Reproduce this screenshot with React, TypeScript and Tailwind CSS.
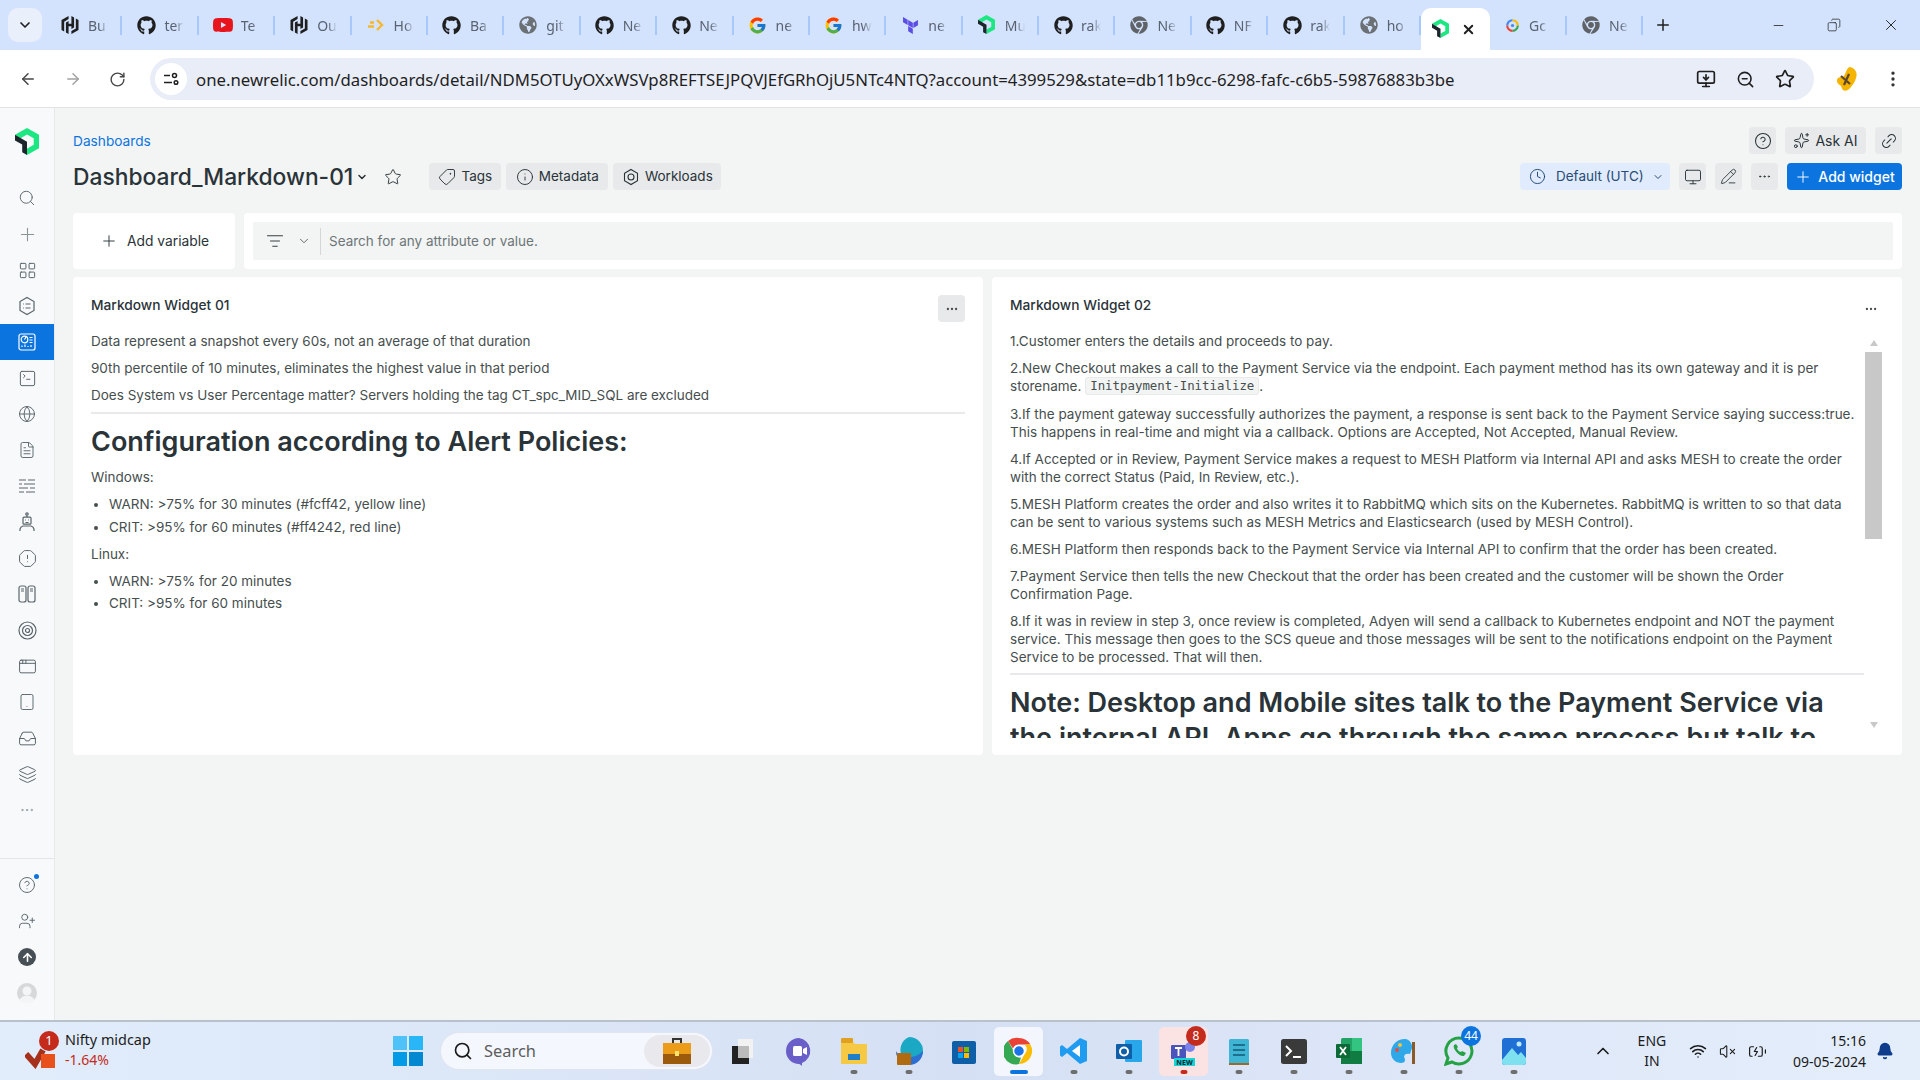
import type { ReactNode } from 'react';
import {
  ArrowLeft,
  ArrowRight,
  RotateCw,
  Star,
  ZoomOut,
  MonitorDown,
  EllipsisVertical,
  Ellipsis,
  ChevronDown,
  ChevronUp,
  Plus,
  Minus,
  Copy,
  X,
  Search,
  LayoutGrid,
  SquareTerminal,
  Globe,
  FileText,
  OctagonAlert,
  AppWindow,
  Tablet,
  Inbox,
  Layers,
  CircleHelp,
  UserPlus,
  Tag,
  Info,
  Clock,
  Monitor,
  PencilLine,
  Link2,
  Sparkles,
  ListFilter,
  Wifi,
  VolumeX,
  BatteryCharging,
  Bell,
  ArrowUp,
} from 'lucide-react';
import { FaGithub, FaChrome, FaGlobeAmericas } from 'react-icons/fa';
import { FcGoogle } from 'react-icons/fc';
import { SiHashicorp, SiYoutube, SiTerraform } from 'react-icons/si';

function NrLogo({ size = 16 }: { size?: number }) {
  return (
    <svg width={size} height={size * 1.12} viewBox="0 0 25 28">
      <path d="M12.5 0 25 7v14l-12.500 7v-6.500l7-4V10.800l-7-4-6.800 3.900L0 7z" fill="#1ce783" />
      <path d="M0 7l12.500 7.200V28l-5-2.800V17.200L0 13z" fill="#1d252c" />
    </svg>
  );
}

function Hostinger() {
  return (
    <svg width="18" height="16" viewBox="0 0 18 16" fill="none" stroke="#f5b82e" strokeWidth="2.400">
      <path d="M1 9.500h6M3 5.500h4M10 3l5 5-5 5" />
    </svg>
  );
}

function CloudFav() {
  return (
    <svg width="17" height="17" viewBox="0 0 16 16" fill="none" strokeWidth="2">
      <path d="M3 8a5 5 0 0 1 5-5" stroke="#4285f4" />
      <path d="M8 3a5 5 0 0 1 5 5" stroke="#fbbc04" />
      <path d="M13 8a5 5 0 0 1-5 5" stroke="#34a853" />
      <path d="M8 13a5 5 0 0 1-5-5" stroke="#ea4335" />
      <circle cx="8" cy="8" r="1.500" fill="#4285f4" stroke="none" />
    </svg>
  );
}

const gh = <FaGithub size={19} className="text-[#1f1f1f]" />;
const hc = <SiHashicorp size={18} className="text-[#1f1f1f]" />;
const goo = <FcGoogle size={19} />;
const chromeGray = <FaChrome size={18} className="text-[#5f6368]" />;
const globe = <FaGlobeAmericas size={18} className="text-[#6b7075]" />;

const tabs: { icon: ReactNode; label: string }[] = [
  { icon: hc, label: 'Bu' },
  { icon: gh, label: 'ter' },
  { icon: <SiYoutube size={20} className="text-[#e8141c]" />, label: 'Te' },
  { icon: hc, label: 'Ou' },
  { icon: <Hostinger />, label: 'Ho' },
  { icon: gh, label: 'Ba' },
  { icon: globe, label: 'git' },
  { icon: gh, label: 'Ne' },
  { icon: gh, label: 'Ne' },
  { icon: goo, label: 'ne' },
  { icon: goo, label: 'hw' },
  { icon: <SiTerraform size={17} className="text-[#5c4ee5]" />, label: 'ne' },
  { icon: <NrLogo size={17} />, label: 'Mu' },
  { icon: gh, label: 'rak' },
  { icon: chromeGray, label: 'Ne' },
  { icon: gh, label: 'NF' },
  { icon: gh, label: 'rak' },
  { icon: globe, label: 'ho' },
];

function Tab({ icon, label }: { icon: ReactNode; label: string }) {
  return (
    <div className="w-[76.400px] h-[19px] flex items-center pl-[14px] border-r-2 border-[#a8c7fa] shrink-0">
      <span className="w-[20px] flex justify-center shrink-0">{icon}</span>
      <span className="ml-[8px] w-[20px] overflow-hidden whitespace-nowrap text-[14px] text-[#5a6270] [mask-image:linear-gradient(to_right,black_55%,transparent)]">
        {label}
      </span>
    </div>
  );
}

function ChromeBar() {
  return (
    <div className="font-['Noto_Sans',sans-serif]">
      <div className="h-[50px] bg-[#d3e3fd] flex items-center relative">
        <div className="ml-[8px] mr-[4px] w-[34px] h-[34px] rounded-[10px] bg-[#e9effb] flex items-center justify-center">
          <ChevronDown size={16} strokeWidth={2.500} className="text-[#1f1f1f]" />
        </div>
        {tabs.map((t, i) => (
          <Tab key={i} icon={t.icon} label={t.label} />
        ))}
        <div className="w-[69px] h-[42px] self-end bg-white rounded-t-[10px] flex items-center pl-[11px] gap-[12px] shrink-0">
          <NrLogo size={17} />
          <X size={15} strokeWidth={3} className="text-[#1f1f1f]" />
        </div>
        <div className="w-[77px] h-[19px] flex items-center pl-[14px] border-r-2 border-[#a8c7fa] shrink-0">
          <CloudFav />
          <span className="ml-[8px] w-[20px] overflow-hidden text-[14px] text-[#5a6270] [mask-image:linear-gradient(to_right,black_55%,transparent)]">Gc</span>
        </div>
        <Tab icon={chromeGray} label="Ne" />
        <Plus size={18} className="ml-[11px] text-[#1f1f1f]" />
        <div className="ml-auto flex items-center pr-[20px] gap-[41px] text-[#1f1f1f]">
          <Minus size={15} strokeWidth={1.250} />
          <Copy size={14} strokeWidth={1.250} className="-scale-x-100" />
          <X size={18} strokeWidth={1.250} />
        </div>
      </div>
      <div className="h-[58px] pt-px bg-white border-b border-[#e3e3e3] flex items-center pl-[19px] text-[#474747]">
        <ArrowLeft size={18} />
        <ArrowRight size={18} className="ml-[27px] text-[#a3a3a3]" />
        <RotateCw size={17} className="ml-[27px]" />
        <div className="ml-[24px] w-[1664px] h-[42px] rounded-full bg-[#e9edf7] flex items-center pl-[5px] pr-[19px]">
          <div className="w-[32px] h-[32px] rounded-full bg-white flex items-center justify-center">
            <svg width="16" height="16" viewBox="0 0 16 16" fill="none" stroke="#1f1f1f" strokeWidth="1.500">
              <path d="M1 4.500h6M1 11.500h8" />
              <circle cx="11.500" cy="4.500" r="2" />
              <circle cx="13" cy="11.500" r="1.800" />
            </svg>
          </div>
          <span className="ml-[9px] pt-[2px] text-[16.770px] text-[#1f1f1f] whitespace-nowrap">
            one.newrelic.com/dashboards/detail/NDM5OTUyOXxWSVp8REFTSEJPQVJEfGRhOjU5NTc4NTQ?account=4399529&state=db11b9cc-6298-fafc-c6b5-59876883b3be
          </span>
          <div className="ml-auto flex items-center gap-[20px] text-[#1f1f1f]">
            <MonitorDown size={20} />
            <ZoomOut size={19} />
            <Star size={20} />
          </div>
        </div>
        <svg width="28" height="28" viewBox="0 0 28 28" className="ml-[19px]">
          <path d="M17 2c5 1 8 6 6 11-1 4-3 6-5 9-2 3-6 5-8 3-2-2-1-4-3-5-3-1-4-5-2-7 3-2 4 0 6-2 2-3 3-9 6-9z" fill="#f5b400" />
          <path d="M8 11l9 8M16 9l-5 11" stroke="#5a4630" strokeWidth="2.200" />
        </svg>
        <EllipsisVertical size={20} className="ml-[22px] text-[#333]" />
      </div>
    </div>
  );
}

const navIcon = 'text-[#59656b]';

function HexList() {
  return (
    <svg width="20" height="20" viewBox="0 0 20 20" fill="none" stroke="#59656b" strokeWidth="1.200">
      <path d="M10 1.500 17 5.500v9L10 18.500 3 14.500v-9z" />
      <path d="M8.500 8h5M8.500 12h5M6 8h.8M6 12h.8" />
    </svg>
  );
}

function DashIcon() {
  return (
    <svg width="18" height="18" viewBox="0 0 18 18" fill="none" stroke="#fff" strokeWidth="1.200">
      <rect x="1" y="1" width="16" height="16" rx="2" />
      <circle cx="6.500" cy="6.500" r="3.300" />
      <path d="M6.500 6.500 8 4M11.500 4.500h3M11.500 7h3M11.500 9.500h3M4 14v-1.500M7 14v-2.500M10 14v-1M13 14v-2" />
    </svg>
  );
}

function LinesIcon() {
  return (
    <svg width="18" height="18" viewBox="0 0 18 18" fill="none" stroke="#59656b" strokeWidth="1.100">
      <path d="M1 3h7M10 3h7M1 7h3M6 7h11M1 11h9M12 11h5M1 15h5M8 15h9" />
    </svg>
  );
}

function ColumnsIcon() {
  return (
    <svg width="18" height="18" viewBox="0 0 18 18" fill="none" stroke="#59656b" strokeWidth="1.200">
      <rect x="1" y="1" width="7" height="16" rx="2" />
      <rect x="10" y="1" width="7" height="16" rx="2" />
      <path d="M3 4h3M12 4h3M3 6h3M12 6h3" />
    </svg>
  );
}

function TargetIcon() {
  return (
    <svg width="19" height="19" viewBox="0 0 19 19" fill="none" stroke="#59656b" strokeWidth="1.200">
      <circle cx="9.500" cy="9.500" r="8.500" />
      <circle cx="9.500" cy="9.500" r="5" />
      <circle cx="9.500" cy="9.500" r="2" />
    </svg>
  );
}

function RobotIcon() {
  return (
    <svg width="18" height="20" viewBox="0 0 18 20" fill="none" stroke="#59656b" strokeWidth="1.200">
      <circle cx="9" cy="2" r="1.200" />
      <path d="M9 3.200v2" />
      <rect x="5" y="5.200" width="8" height="7" rx="1" />
      <path d="M7 8h.8M10.200 8h.8M7.500 10.500h3" />
      <path d="M2 19v-2a4 4 0 0 1 3-3h8a4 4 0 0 1 3 3v2" />
    </svg>
  );
}

function Avatar() {
  return (
    <svg width="20" height="20" viewBox="0 0 20 20">
      <circle cx="10" cy="10" r="10" fill="#d6d8da" />
      <circle cx="10" cy="8" r="4.500" fill="#f4f5f6" />
      <path d="M2.500 17a8 6.500 0 0 1 15 0 10 10 0 0 1-15 0z" fill="#f4f5f6" />
    </svg>
  );
}

const navItems: ReactNode[] = [
  <Search size={18} strokeWidth={1.250} className={navIcon} />,
  <Plus size={21} strokeWidth={1.250} className="text-[#8a9499]" />,
  <LayoutGrid size={19} strokeWidth={1.250} className={navIcon} />,
  <HexList />,
  <DashIcon />,
  <SquareTerminal size={19} strokeWidth={1.250} className={navIcon} />,
  <Globe size={18} strokeWidth={1.250} className={navIcon} />,
  <FileText size={18} strokeWidth={1.250} className={navIcon} />,
  <LinesIcon />,
  <RobotIcon />,
  <OctagonAlert size={19} strokeWidth={1.250} className={navIcon} />,
  <ColumnsIcon />,
  <TargetIcon />,
  <AppWindow size={19} strokeWidth={1.250} className={navIcon} />,
  <Tablet size={18} strokeWidth={1.250} className={navIcon} />,
  <Inbox size={19} strokeWidth={1.250} className={navIcon} />,
  <Layers size={19} strokeWidth={1.250} className={navIcon} />,
  <Ellipsis size={16} strokeWidth={1.250} className="text-[#8a9499]" />,
];

function Sidebar() {
  return (
    <div className="w-[55px] shrink-0 bg-[#f8f9fb] border-r border-[#e8eaea] flex flex-col">
      <div className="h-[72px] pt-[20px] pr-[1px] flex justify-center">
        <NrLogo size={24} />
      </div>
      <div className="flex-1">
        {navItems.map((icon, i) => (
          <div key={i} className={`h-[36px] flex items-center justify-center ${i === 4 ? 'bg-[#0c74df]' : ''}`}>
            {icon}
          </div>
        ))}
      </div>
      <div className="h-[162px] border-t border-[#e3e5e6] pt-[8px]">
        <div className="h-[36px] flex items-center justify-center">
          <span className="relative">
            <CircleHelp size={18} strokeWidth={1.250} className={navIcon} />
            <span className="absolute -top-[2px] -right-[3px] w-[5px] h-[5px] rounded-full bg-[#0c74df]" />
          </span>
        </div>
        <div className="h-[36px] flex items-center justify-center">
          <UserPlus size={18} strokeWidth={1.250} className={navIcon} />
        </div>
        <div className="h-[36px] flex items-center justify-center">
          <span className="w-[18px] h-[18px] rounded-full bg-[#464e56] flex items-center justify-center">
            <ArrowUp size={13} strokeWidth={3} className="text-white" />
          </span>
        </div>
        <div className="h-[36px] flex items-center justify-center">
          <Avatar />
        </div>
      </div>
    </div>
  );
}

function Chip({ icon, label, width }: { icon: ReactNode; label: string; width: string }) {
  return (
    <div className={`h-[27px] bg-[#e7e9ea] rounded-[4px] flex items-center justify-center gap-[5px] text-[13.500px] text-[#293338] ${width}`}>
      {icon}
      <span>{label}</span>
    </div>
  );
}

function IconBtn({ children }: { children: ReactNode }) {
  return <div className="w-[27px] h-[27px] bg-[#e7e9ea] rounded-[4px] flex items-center justify-center text-[#293338]">{children}</div>;
}

function PageHeader() {
  return (
    <>
      <div className="h-[27px] flex items-center">
        <a className="pt-[2px] text-[13.700px] text-[#0c74df]">Dashboards</a>
        <div className="ml-auto flex items-center gap-[9px]">
          <IconBtn>
            <CircleHelp size={18} strokeWidth={1.400} />
          </IconBtn>
          <div className="h-[27px] w-[81px] bg-[#e7e9ea] rounded-[4px] flex items-center justify-center gap-[5px] text-[14px] text-[#293338]">
            <Sparkles size={17} strokeWidth={1.400} />
            <span>Ask AI</span>
          </div>
          <IconBtn>
            <Link2 size={18} strokeWidth={1.400} className="-rotate-45" />
          </IconBtn>
        </div>
      </div>
      <div className="mt-[9px] h-[27px] flex items-center">
        <span className="pt-[2px] text-[22.800px] font-medium text-[#293338] whitespace-nowrap">Dashboard_Markdown-01</span>
        <ChevronDown size={12} strokeWidth={3} className="ml-[3px] text-[#293338]" />
        <Star size={18} strokeWidth={1.250} className="ml-[16px] text-[#293338]" />
        <div className="ml-[27px] flex gap-[5px]">
          <Chip width="w-[72px]" icon={<Tag size={18} strokeWidth={1.250} className="rotate-90" />} label="Tags" />
          <Chip width="w-[102px]" icon={<Info size={18} strokeWidth={1.250} />} label="Metadata" />
          <Chip
            width="w-[108px]"
            icon={
              <svg width="18" height="18" viewBox="0 0 18 18" fill="none" stroke="#293338" strokeWidth="1.100">
                <path d="M9 1.500 15.500 5.300v7.400L9 16.500 2.500 12.700V5.300z" />
                <circle cx="9" cy="9" r="3" />
              </svg>
            }
            label="Workloads"
          />
        </div>
        <div className="ml-auto flex items-center gap-[9px]">
          <div className="w-[150px] h-[27px] rounded-[4px] bg-[#e0ecfd] flex items-center pl-[9px] text-[13.500px] text-[#2a4a75]">
            <Clock size={17} strokeWidth={1.250} className="text-[#123a6b]" />
            <span className="ml-[10px]">Default (UTC)</span>
            <ChevronDown size={12} strokeWidth={2} className="ml-[8px]" />
          </div>
          <IconBtn>
            <Monitor size={18} strokeWidth={1.250} />
          </IconBtn>
          <IconBtn>
            <PencilLine size={17} strokeWidth={1.250} />
          </IconBtn>
          <IconBtn>
            <Ellipsis size={15} strokeWidth={1.500} />
          </IconBtn>
          <div className="w-[115px] h-[27px] rounded-[4px] bg-[#0c74df] flex items-center justify-center gap-[6px] text-[14px] font-medium text-white">
            <Plus size={18} strokeWidth={1.250} />
            <span>Add widget</span>
          </div>
        </div>
      </div>
    </>
  );
}

function FilterBar() {
  return (
    <div className="mt-[23px] flex gap-[9px] h-[56px]">
      <div className="w-[162px] rounded-[4px] bg-white flex items-center pl-[27px] gap-[9px] text-[13.800px] text-[#293338]">
        <Plus size={18} strokeWidth={1.250} />
        <span>Add variable</span>
      </div>
      <div className="flex-1 rounded-[4px] bg-white p-[9px]">
        <div className="h-full rounded-[2px] bg-[#f3f4f4] flex items-center">
          <div className="w-[68px] flex items-center pl-[13px] gap-[13px] border-r border-[#d5d7d7] h-[27px]">
            <ListFilter size={18} strokeWidth={1.250} className="text-[#293338]" />
            <ChevronDown size={14} strokeWidth={1.250} className="text-[#293338]" />
          </div>
          <span className="ml-[8px] text-[13.500px] text-[#6d7678]">Search for any attribute or value.</span>
        </div>
      </div>
    </div>
  );
}

const para = 'mb-[9px]';

function WidgetOne() {
  return (
    <div className="rounded-[4px] bg-white pt-[18px] px-[18px]">
      <div className="h-[27px] flex justify-between">
        <span className="text-[13.750px] leading-[18px] pt-px font-medium text-[#293338]">Markdown Widget 01</span>
        <div className="w-[27px] h-[27px] rounded-[4px] bg-[#e7e9ea] flex items-center justify-center">
          <Ellipsis size={14} className="text-[#464e4e]" />
        </div>
      </div>
      <div className="mt-[10px] text-[13.500px] leading-[18px] text-[#464e4e]">
        <p className={para}>Data represent a snapshot every 60s, not an average of that duration</p>
        <p className={para}>90th percentile of 10 minutes, eliminates the highest value in that period</p>
        <p className="mb-[8px]">Does System vs User Percentage matter? Servers holding the tag CT_spc_MID_SQL are excluded</p>
        <hr className="border-0 h-[2px] bg-[#e7e9ea]" />
        <h1 className="mt-[10px] mb-[9px] text-[27px] leading-[35px] font-semibold text-[#293338]">Configuration according to Alert Policies:</h1>
        <p className={para}>Windows:</p>
        <ul className="list-disc pl-[18px] mb-[9px] space-y-[5px]">
          <li>WARN: &gt;75% for 30 minutes (#fcff42, yellow line)</li>
          <li>CRIT: &gt;95% for 60 minutes (#ff4242, red line)</li>
        </ul>
        <p className={para}>Linux:</p>
        <ul className="list-disc pl-[18px] space-y-[4px]">
          <li>WARN: &gt;75% for 20 minutes</li>
          <li>CRIT: &gt;95% for 60 minutes</li>
        </ul>
      </div>
    </div>
  );
}

function WidgetTwo() {
  return (
    <div className="rounded-[4px] bg-white pt-[18px] pl-[18px] pr-[18px] flex flex-col">
      <div className="h-[27px] flex justify-between">
        <span className="text-[13.750px] leading-[18px] pt-px font-medium text-[#293338]">Markdown Widget 02</span>
        <div className="w-[27px] h-[27px] flex items-center justify-center">
          <Ellipsis size={14} className="text-[#464e4e]" />
        </div>
      </div>
      <div className="mt-[10px] h-[406px] flex">
        <div className="w-[854px] overflow-hidden text-[13.500px] leading-[18px] text-[#464e4e]">
          <p className={para}>1.Customer enters the details and proceeds to pay.</p>
          <p className="mb-[10px]">
            2.New Checkout makes a call to the Payment Service via the endpoint. Each payment method has its own gateway and it is per storename.{' '}
            <code className="inline-block align-top h-[18px] leading-[16px] font-['DejaVu_Sans_Mono',monospace] text-[12.400px] px-[4px] bg-[#f3f4f4] border border-[#e7e9ea] rounded-[3px]">Initpayment-Initialize</code>.
          </p>
          <p className={para}>
            3.If the payment gateway successfully authorizes the payment, a response is sent back to the Payment Service saying success:true. This happens in real-time and might via a callback. Options are Accepted, Not Accepted, Manual Review.
          </p>
          <p className={para}>
            4.If Accepted or in Review, Payment Service makes a request to MESH Platform via Internal API and asks MESH to create the order with the correct Status (Paid, In Review, etc.).
          </p>
          <p className={para}>
            5.MESH Platform creates the order and also writes it to RabbitMQ which sits on the Kubernetes. RabbitMQ is written to so that data can be sent to various systems such as MESH Metrics and Elasticsearch (used by MESH Control).
          </p>
          <p className={para}>6.MESH Platform then responds back to the Payment Service via Internal API to confirm that the order has been created.</p>
          <p className={para}>7.Payment Service then tells the new Checkout that the order has been created and the customer will be shown the Order Confirmation Page.</p>
          <p className="mb-[7px]">
            8.If it was in review in step 3, once review is completed, Adyen will send a callback to Kubernetes endpoint and NOT the payment service. This message then goes to the SCS queue and those messages will be sent to the notifications endpoint on the Payment Service to be processed. That will then.
          </p>
          <hr className="border-0 h-[2px] bg-[#e7e9ea]" />
          <h1 className="mt-[10px] text-[27px] leading-[35px] font-semibold text-[#293338]">
            Note: Desktop and Mobile sites talk to the Payment Service via the internal API. Apps go through the same process but talk to
          </h1>
        </div>
        <div className="ml-[1px] w-[17px] flex flex-col items-center pt-[8px]">
          <div className="w-0 h-0 border-x-[4px] border-x-transparent border-b-[6px] border-b-[#c8c8c8]" />
          <div className="mt-[6px] w-[17px] h-[187px] bg-[#c8c8c8]" />
          <div className="mt-[183px] w-0 h-0 border-x-[4px] border-x-transparent border-t-[6px] border-t-[#c8c8c8]" />
        </div>
      </div>
    </div>
  );
}

function WinLogo() {
  return (
    <div className="grid grid-cols-2 gap-[2px] w-[30px] h-[30px]">
      <div className="bg-[#4fc3f7]" />
      <div className="bg-[#29b6f6]" />
      <div className="bg-[#039be5]" />
      <div className="bg-[#0288d1]" />
    </div>
  );
}

function Svg({ children }: { children: ReactNode }) {
  return (
    <svg width="30" height="30" viewBox="0 0 30 30">
      {children}
    </svg>
  );
}

const taskIcons: { icon: ReactNode; dot?: string; tile?: string; badge?: string; badgeColor?: string }[] = [
  {
    icon: (
      <Svg>
        <rect x="9" y="3" width="15" height="19" fill="#f2f2f2" />
        <rect x="3" y="10" width="17" height="18" fill="#222" />
        <rect x="9" y="10" width="11" height="12" fill="#bbb" />
      </Svg>
    ),
  },
  {
    icon: (
      <Svg>
        <path d="M15 2a13 13 0 1 0 0 26c1 0 2 1 3 2v-3a13 13 0 0 0-3-25z" fill="#6a5fc8" />
        <rect x="9" y="10" width="9" height="10" rx="1.500" fill="#fff" />
        <path d="m19 13 4-2v8l-4-2z" fill="#fff" />
      </Svg>
    ),
  },
  {
    dot: '#6e6e6e',
    icon: (
      <Svg>
        <path d="M2 5h11l3 3h12v20H2z" fill="#f6c945" />
        <rect x="2" y="2" width="12" height="5" rx="1" fill="#e0a020" />
        <rect x="9" y="18" width="12" height="6" fill="#1e7fc8" />
      </Svg>
    ),
  },
  {
    dot: '#6e6e6e',
    icon: (
      <Svg>
        <path d="M15 1a14 14 0 0 1 14 14c0 5-4 7-8 7H9a14 14 0 0 1 6-21z" fill="#1aa8c4" />
        <path d="M29 15c0 8-6 14-14 14A14 14 0 0 1 2 15c3 7 17 10 27 0z" fill="#2c6fd1" />
        <rect x="3" y="17" width="14" height="12" rx="1" fill="#b06a10" />
      </Svg>
    ),
  },
  {
    icon: (
      <Svg>
        <rect x="3" y="5" width="24" height="23" rx="2" fill="#0f5ea8" />
        <rect x="9" y="11" width="5" height="5" fill="#f25022" />
        <rect x="15" y="11" width="5" height="5" fill="#7fba00" />
        <rect x="9" y="17" width="5" height="5" fill="#00a4ef" />
        <rect x="15" y="17" width="5" height="5" fill="#ffb900" />
      </Svg>
    ),
  },
  {
    tile: 'bg-[#f3f6fc]',
    dot: '#0c74df',
    icon: (
      <Svg>
        <path d="M15 2a13 13 0 0 1 11.300 6.500H15a6.500 6.500 0 0 0-6 4L4 5a13 13 0 0 1 11-3z" fill="#ea4335" />
        <path d="M26.300 8.500A13 13 0 0 1 15 28l5.600-9.700a6.500 6.500 0 0 0 0-9.800z" fill="#fbbc04" />
        <path d="M15 28A13 13 0 0 1 4 5l5.600 9.700a6.500 6.500 0 0 0 7.400 6.900z" fill="#34a853" />
        <circle cx="15" cy="15" r="5.500" fill="#1a73e8" stroke="#fff" strokeWidth="1.500" />
      </Svg>
    ),
  },
  {
    dot: '#6e6e6e',
    icon: (
      <Svg>
        <path d="M21 2 28 5v20l-7 3-13-11-5 4-2-1.500V10.500L3 9l5 4z" fill="#1f9cf0" />
        <path d="M21 9v12l-8-6z" fill="#fff" />
      </Svg>
    ),
  },
  {
    dot: '#6e6e6e',
    icon: (
      <Svg>
        <rect x="11" y="4" width="17" height="22" rx="1" fill="#28a8ea" />
        <rect x="2" y="8" width="16" height="15" rx="1" fill="#0f5ea8" />
        <circle cx="10" cy="15.500" r="4" fill="none" stroke="#fff" strokeWidth="2" />
      </Svg>
    ),
  },
  {
    tile: 'bg-[#fbe3e3]',
    dot: '#c42b1c',
    badge: '8',
    badgeColor: 'bg-[#c42b1c]',
    icon: (
      <Svg>
        <rect x="2" y="9" width="15" height="14" rx="1" fill="#4b53bc" />
        <path d="M6 12h7M9.500 12v8" stroke="#fff" strokeWidth="1.800" />
        <circle cx="21" cy="11" r="5" fill="#7b83eb" />
        <rect x="5" y="22" width="21" height="8" fill="#18d4d4" />
        <text x="15.500" y="29" textAnchor="middle" fontSize="7" fontWeight="700" fill="#123">NEW</text>
      </Svg>
    ),
  },
  {
    dot: '#6e6e6e',
    icon: (
      <Svg>
        <rect x="5" y="3" width="20" height="25" rx="1.500" fill="#3fb5d6" />
        <path d="M9 9h12M9 14h12M9 19h12" stroke="#1d6f8c" strokeWidth="2" />
        <rect x="5" y="27" width="20" height="2" fill="#9a6a2b" />
      </Svg>
    ),
  },
  {
    dot: '#6e6e6e',
    icon: (
      <Svg>
        <rect x="2" y="3" width="26" height="25" rx="2.500" fill="#3a3a3a" />
        <path d="m7 10 5 5-5 5M14 21h8" stroke="#fff" strokeWidth="2" fill="none" />
      </Svg>
    ),
  },
  {
    dot: '#6e6e6e',
    icon: (
      <Svg>
        <rect x="7" y="2" width="21" height="26" rx="1.500" fill="#21a366" />
        <rect x="18" y="2" width="10" height="13" fill="#33c481" />
        <rect x="7" y="15" width="21" height="13" fill="#107c41" />
        <rect x="2" y="8" width="14" height="14" rx="1" fill="#0b6a37" />
        <path d="m6 11 6 8M12 11l-6 8" stroke="#fff" strokeWidth="1.800" />
      </Svg>
    ),
  },
  {
    dot: '#6e6e6e',
    icon: (
      <Svg>
        <path d="M16 3C8 3 2 9 2 17c0 6 5 10 10 10 4 0 5-3 3-6 0-3 3-4 6-3l2-6c1-4-3-9-7-9z" fill="#2ea8e8" />
        <circle cx="8" cy="14" r="2" fill="#e34f3c" />
        <circle cx="11" cy="9" r="2" fill="#f7c23c" />
        <rect x="23" y="6" width="3" height="22" fill="#8a5a2b" />
      </Svg>
    ),
  },
  {
    dot: '#6e6e6e',
    badge: '44',
    badgeColor: 'bg-[#0c74df]',
    icon: (
      <Svg>
        <path d="M15 2a13 13 0 0 0-11 20l-2 6 6-2A13 13 0 1 0 15 2z" fill="none" stroke="#25a244" strokeWidth="3" />
        <path d="M10 9c-2 3 5 12 10 11l2-3-4-2-1 1c-2 0-4-3-4-4l1-1-2-3z" fill="#25a244" />
      </Svg>
    ),
  },
  {
    dot: '#6e6e6e',
    icon: (
      <Svg>
        <rect x="3" y="2" width="24" height="27" rx="3" fill="#1f6fd4" />
        <path d="M3 24 13 12l6 7 3-3 5 6v4a3 3 0 0 1-3 3H6a3 3 0 0 1-3-3z" fill="#7fe0f0" />
        <circle cx="20" cy="8" r="2.500" fill="#bfe9ff" />
      </Svg>
    ),
  },
];

function TaskItem({ item }: { item: (typeof taskIcons)[number] }) {
  return (
    <div className={`relative w-[49px] mx-[3px] h-[49px] rounded-[5px] flex items-center justify-center shrink-0 ${item.tile ?? ''}`}>
      {item.icon}
      {item.badge && (
        <span className={`absolute top-[-1px] right-[2px] min-w-[20px] h-[20px] px-[3px] rounded-full text-white text-[12px] flex items-center justify-center ${item.badgeColor}`}>
          {item.badge}
        </span>
      )}
      {item.dot && (
        <span
          className={`absolute bottom-[2px] left-1/2 -translate-x-1/2 h-[4px] rounded-full ${item.dot === '#0c74df' ? 'w-[18px]' : 'w-[7px]'}`}
          style={{ backgroundColor: item.dot }}
        />
      )}
    </div>
  );
}

function Taskbar() {
  return (
    <div className="h-[60px] border-t-2 border-[#b7c2cd] bg-gradient-to-r from-[#e1edfb] via-[#d6e0f4] to-[#e4eefb] flex items-center font-['Noto_Sans',sans-serif] text-[#1b1b1b]">
      <div className="w-[380px] flex items-center pl-[25px] shrink-0">
        <div className="relative w-[39px] h-[36px]">
          <svg width="32" height="28" viewBox="0 0 32 28" className="absolute left-0 bottom-0">
            <path d="M1 13l9 10 8-14" fill="none" stroke="#a5301c" strokeWidth="6" />
            <rect x="16" y="13" width="14" height="14" fill="#e8501c" />
          </svg>
          <span className="absolute left-[14px] -top-[2px] w-[20px] h-[20px] rounded-full bg-[#c42b1c] text-white text-[13px] flex items-center justify-center">1</span>
        </div>
        <div className="ml-[1px] flex flex-col -mt-[2px]">
          <span className="text-[14.400px] leading-[20px]">Nifty midcap</span>
          <span className="text-[14px] leading-[20px] text-[#c42b1c]">-1.64%</span>
        </div>
      </div>
      <div className="w-[55px] flex justify-center shrink-0">
        <WinLogo />
      </div>
      <div className="ml-[5px] w-[273px] h-[38px] rounded-full bg-[#f4f7fe] border border-[#e1e5ee] flex items-center pl-[12px] pr-[2px] shrink-0">
        <Search size={20} strokeWidth={2} />
        <span className="ml-[11px] text-[16.400px] text-[#5d5d5d]">Search</span>
        <div className="ml-auto w-[66px] h-[32px] rounded-full bg-[#e9e9ed] flex items-center justify-center">
          <svg width="30" height="30" viewBox="0 0 30 30">
            <path d="M11 7V3h8v4" fill="none" stroke="#333" strokeWidth="2" />
            <rect x="1" y="7" width="28" height="11" fill="#eb9c18" />
            <rect x="1" y="18" width="28" height="10" fill="#9c5a0c" />
            <rect x="13" y="15" width="4" height="5" fill="#ffe36b" />
          </svg>
        </div>
      </div>
      <div className="ml-[3px] flex">
        {taskIcons.map((item, i) => (
          <TaskItem key={i} item={item} />
        ))}
      </div>
      <div className="ml-auto flex items-center pr-[26px]">
        <ChevronUp size={20} />
        <div className="ml-[22px] w-[34px] text-center text-[14px] leading-[20px]">
          ENG
          <br />
          IN
        </div>
        <Wifi size={18} className="ml-[20px]" />
        <VolumeX size={17} strokeWidth={1.500} className="ml-[12px]" />
        <BatteryCharging size={19} strokeWidth={1.500} className="ml-[12px]" />
        <div className="ml-[26px] flex flex-col items-end text-[14px] leading-[21px]">
          <span>15:16</span>
          <span>09-05-2024</span>
        </div>
        <Bell size={18} fill="#0f3d8c" className="ml-[10px] text-[#0f3d8c]" />
      </div>
    </div>
  );
}

export default function App() {
  return (
    <div className="w-[1920px] h-[1080px] flex flex-col overflow-hidden font-['Inter',sans-serif] bg-[#f3f4f4]">
      <ChromeBar />
      <div className="flex-1 flex min-h-0">
        <Sidebar />
        <div className="flex-1 pt-[19px] pl-[18px] pr-[18px]">
          <PageHeader />
          <FilterBar />
          <div className="mt-[8px] h-[478px] grid grid-cols-2 gap-[9px]">
            <WidgetOne />
            <WidgetTwo />
          </div>
        </div>
      </div>
      <Taskbar />
    </div>
  );
}
